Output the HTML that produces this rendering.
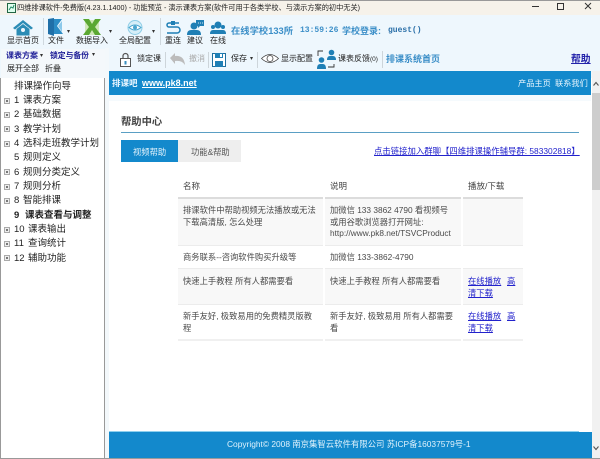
<!DOCTYPE html>
<html><head><meta charset="utf-8">
<style>
html,body{margin:0;padding:0;width:600px;height:459px;overflow:hidden;background:#fff}
body{position:relative;font-family:"Liberation Sans","Noto Sans CJK SC",sans-serif;color:#333}
.a,.t,.r{position:absolute}
.t{white-space:nowrap;line-height:12px;height:12px}
.b{font-size:8px;color:#222}
.tr{font-size:9.5px;color:#222;left:14px}
.n{display:inline-block;width:9px}
.box{position:absolute;left:4px;width:4px;height:4px;border:1px solid #aaa;background:linear-gradient(#777,#777) center/2px 2px no-repeat #eee}
.c{font-size:8.3px;color:#4a4a4a}
.l{font-size:8.3px;color:#22c;text-decoration:underline}
svg{position:absolute;overflow:visible}
</style></head><body>

<div class="a" style="left:0;top:0;width:600px;height:15px;background:#f6f2ea;border-top:1px solid #999;box-sizing:border-box"></div>
<div class="a" style="left:0;top:15px;width:600px;height:63px;background:#eef7fd"></div>
<div class="a" style="left:105px;top:48px;width:4px;height:411px;background:#f3f8fb"></div>
<div class="a" style="left:0;top:78px;width:105px;height:381px;background:#fff;border-left:1px solid #999;border-right:1px solid #999;box-sizing:border-box"></div>
<div class="a" style="left:0;top:458px;width:600px;height:1px;background:#999"></div>
<div class="a" style="left:1px;top:49px;width:104px;height:29px;background:#f4f8fb"></div>

<!-- title -->
<svg style="left:7px;top:3px" width="9" height="10"><rect x=".5" y=".5" width="8" height="9" fill="#dfe" stroke="#264"/><path d="M2 7l2-3 2 1 1-3" stroke="#286" fill="none"/></svg>
<div class="t" style="left:17px;top:2px;font-size:7.2px;color:#222">四维排课软件-免费版(4.23.1.1400) - 功能预览 - 演示课表方案(软件可用于各类学校、与演示方案的初中无关)</div>
<svg style="left:530px;top:0" width="70" height="15"><path d="M2 6.500h7" stroke="#333"/><rect x="27.500" y="3.500" width="6" height="6" fill="none" stroke="#333"/><path d="M55 3l6 6M61 3l-6 6" stroke="#333"/></svg>

<!-- toolbar row 1 -->
<svg style="left:13px;top:19px" width="20" height="17"><path d="M0 9L10 1l10 8-2 1.500L10 4 2 10.500z" fill="#2b8cb5"/><path d="M3.500 10L10 5l6.500 5v6.500h-13z" fill="#2b8cb5"/><circle cx="10" cy="11" r="2" fill="#eef7fd"/></svg>
<div class="t b" style="left:7px;top:35px">显示首页</div>
<div class="a" style="left:43px;top:18px;width:1px;height:27px;background:#cfd8de"></div>
<svg style="left:48px;top:18px" width="16" height="18"><path d="M0 1l6-1v18l-6-2z" fill="#1f6fa8"/><path d="M6 1h8L9 8l6 8H6z" fill="#2b8cc5"/><path d="M10 8l4-5v11z" fill="#8cc9ea"/></svg>
<div class="t b" style="left:48px;top:35px">文件</div>
<div class="t" style="left:67px;top:26px;font-size:6px;color:#333">▾</div>
<svg style="left:83px;top:19px" width="18" height="17"><path d="M2 1h14v15H2z" fill="#cfe8b8"/><path d="M0 0h6l3 5 3-5h6l-6 8 6 8h-6l-3-5-3 5H0l6-8z" fill="#5aa832"/></svg>
<div class="t b" style="left:76px;top:35px">数据导入</div>
<div class="t" style="left:109px;top:26px;font-size:6px;color:#333">▾</div>
<svg style="left:127px;top:20px" width="16" height="15"><circle cx="8" cy="7.500" r="7" fill="#d6eef8" stroke="#8ccde6"/><path d="M2 7.500q6-5 12 0q-6 5-12 0z" fill="#fff" stroke="#4aa6cf"/><circle cx="8" cy="7.500" r="2" fill="#4aa6cf"/></svg>
<div class="t b" style="left:119px;top:35px">全局配置</div>
<div class="t" style="left:152px;top:26px;font-size:6px;color:#333">▾</div>
<div class="a" style="left:160px;top:18px;width:1px;height:27px;background:#cfd8de"></div>
<svg style="left:166px;top:20px" width="15" height="15"><path d="M6 3h7M1 13h10a3 3 0 0 0 0-6H3a2 2 0 0 1 0-4h3" fill="none" stroke="#1f7fb5" stroke-width="1.500"/><rect x="5" y="1" width="4" height="4" fill="#1f7fb5"/></svg>
<div class="t b" style="left:165px;top:35px">重连</div>
<svg style="left:187px;top:20px" width="17" height="15"><circle cx="7" cy="6" r="3.500" fill="#1f7fb5"/><path d="M0 15q0-5 4-5h6q4 0 4 5z" fill="#1f7fb5"/><path d="M9 0h8v6h-4l-2 2V6H9z" fill="#1f7fb5"/><path d="M11 3h.8M13 3h.8M15 3h.8" stroke="#fff"/></svg>
<div class="t b" style="left:187px;top:35px">建议</div>
<svg style="left:210px;top:21px" width="16" height="13"><circle cx="8" cy="4" r="3.500" fill="#1f7fb5"/><circle cx="3" cy="6" r="2" fill="#1f7fb5"/><circle cx="13" cy="6" r="2" fill="#1f7fb5"/><path d="M0 13q0-4 3-4h10q3 0 3 4z" fill="#1f7fb5"/></svg>
<div class="t b" style="left:210px;top:35px">在线</div>
<div class="t" style="left:231px;top:25px;font-size:9.300px;font-weight:bold;color:#3c8fc8">在线学校133所</div>
<div class="t" style="left:300px;top:25px;font-size:8px;font-weight:bold;font-family:'Liberation Mono',monospace;color:#3c8fc8">13:59:26</div>
<div class="t" style="left:342px;top:25px;font-size:9px;color:#3c8fc8;font-weight:bold">学校登录:</div>
<div class="t" style="left:388px;top:25px;font-size:8px;font-family:'Liberation Mono',monospace;color:#2a6fa8;font-weight:bold">guest()</div>

<!-- toolbar row 2 -->
<div class="t" style="left:6px;top:50px;font-size:8px;font-weight:bold;color:#1c1c96">课表方案</div>
<div class="t" style="left:40px;top:50px;font-size:6px;color:#333">▾</div>
<div class="t" style="left:50px;top:50px;font-size:7.800px;font-weight:bold;color:#1c1c96">锁定与备份</div>
<div class="t" style="left:92px;top:49px;font-size:6px;color:#333">▾</div>
<div class="t b" style="left:7px;top:63px">展开全部</div>
<div class="t b" style="left:45px;top:63px">折叠</div>

<svg style="left:120px;top:52px" width="11" height="15"><path d="M3 7V4a2.500 2.500 0 0 1 5 0v3" fill="none" stroke="#555" stroke-width="1.200"/><rect x=".5" y="6.500" width="10" height="8" fill="#fff" stroke="#555"/><rect x="4.500" y="9" width="2" height="3.500" fill="#3a8fbf"/></svg>
<div class="t b" style="left:137px;top:53px">锁定课</div>
<div class="a" style="left:165px;top:52px;width:1px;height:16px;background:#cdd5da"></div>
<svg style="left:170px;top:52px" width="16" height="14"><path d="M0 6l5-5v3q9-1 10 9-3-5-10-4v3z" fill="#bcbcbc"/></svg>
<div class="t" style="left:189px;top:53px;font-size:8px;color:#aaa">撤消</div>
<div class="a" style="left:208px;top:52px;width:1px;height:16px;background:#cdd5da"></div>
<svg style="left:212px;top:53px" width="14" height="14"><path d="M.5.500h13v13H.5z" fill="#fff" stroke="#1f6f9f"/><path d="M3 0h8v5H3zM3 8h8v6H3z" fill="#1f7fb5"/><path d="M8 1h2v3H8z" fill="#fff"/></svg>
<div class="t b" style="left:231px;top:53px">保存</div>
<div class="t" style="left:250px;top:53px;font-size:6px;color:#333">▾</div>
<div class="a" style="left:257px;top:52px;width:1px;height:16px;background:#cdd5da"></div>
<svg style="left:261px;top:53px" width="18" height="11"><path d="M.5 5.500q8.500-8 17 0q-8.500 8-17 0z" fill="#fff" stroke="#444" stroke-width=".8"/><circle cx="9" cy="5.500" r="3" fill="none" stroke="#444" stroke-width=".8"/></svg>
<div class="t b" style="left:281px;top:53px">显示配置</div>
<svg style="left:317px;top:49px" width="21" height="20"><circle cx="14.500" cy="3.500" r="2.800" fill="#1f7fb5"/><path d="M10 11q0-4 3-4h3q3 0 3 4z" fill="#1f7fb5"/><circle cx="4.500" cy="11" r="2.800" fill="#1f7fb5"/><path d="M0 20q0-5 3-5h3q3 0 3 5z" fill="#1f7fb5"/><path d="M1 7V2h5M11 18h6v-3" fill="none" stroke="#333" stroke-width=".9"/></svg>
<div class="t b" style="left:338px;top:53px">课表反馈<span style="font-size:6.500px">(0)</span></div>
<div class="a" style="left:382px;top:51px;width:1px;height:17px;background:#cdd5da"></div>
<div class="t" style="left:386px;top:53px;font-size:9px;font-weight:bold;color:#3c8fc8">排课系统首页</div>
<div class="t" style="left:571px;top:54px;font-size:9.800px;font-weight:bold;color:#22a;text-decoration:underline">帮助</div>

<!-- blue header -->
<div class="a" style="left:109px;top:71px;width:482px;height:24px;background:#1389cc"></div>
<div class="a" style="left:109px;top:95px;width:482px;height:6px;background:#f5fafd"></div>
<div class="t" style="left:112px;top:77px;font-size:8.500px;font-weight:bold;color:#eaf6ff">排课吧</div>
<div class="t" style="left:142px;top:77px;font-size:9px;font-weight:bold;color:#fff;text-decoration:underline">www.pk8.net</div>
<div class="t" style="left:518px;top:78px;font-size:8.200px;color:#e4f3fc">产品主页</div>
<div class="t" style="left:555px;top:78px;font-size:8.200px;color:#e4f3fc">联系我们</div>

<!-- scrollbar -->
<div class="a" style="left:592px;top:71px;width:8px;height:387px;background:#f1f1f1"></div>
<div class="a" style="left:592px;top:93px;width:8px;height:97px;background:#cdcdcd"></div>
<svg style="left:592px;top:71px" width="8" height="387"><path d="M1.500 14.500L4 11.500l2.500 3M1.500 375.500L4 378.500l2.500-3" fill="none" stroke="#555" stroke-width="1.100"/></svg>

<!-- tree -->
<div class="t tr" style="top:81px;left:14px">排课操作向导</div>
<i class="box" style="top:98px"></i><div class="t tr" style="top:95px"><span class="n">1</span>课表方案</div>
<i class="box" style="top:112px"></i><div class="t tr" style="top:109px"><span class="n">2</span>基础数据</div>
<i class="box" style="top:126px"></i><div class="t tr" style="top:124px"><span class="n">3</span>教学计划</div>
<i class="box" style="top:141px"></i><div class="t tr" style="top:138px"><span class="n">4</span>选科走班教学计划</div>
<div class="t tr" style="top:152px"><span class="n">5</span>规则定义</div>
<i class="box" style="top:169px"></i><div class="t tr" style="top:167px"><span class="n">6</span>规则分类定义</div>
<i class="box" style="top:184px"></i><div class="t tr" style="top:181px"><span class="n">7</span>规则分析</div>
<i class="box" style="top:198px"></i><div class="t tr" style="top:195px"><span class="n">8</span>智能排课</div>
<div class="t tr" style="top:210px;font-weight:bold;color:#222"><span class="n" style="width:11px">9</span>课表查看与调整</div>
<i class="box" style="top:227px"></i><div class="t tr" style="top:224px"><span class="n" style="width:14px">10</span>课表输出</div>
<i class="box" style="top:241px"></i><div class="t tr" style="top:238px"><span class="n" style="width:14px">11</span>查询统计</div>
<i class="box" style="top:255px"></i><div class="t tr" style="top:253px"><span class="n" style="width:14px">12</span>辅助功能</div>

<!-- content -->
<div class="t" style="left:121px;top:117px;font-size:10.300px;font-weight:bold;color:#444">帮助中心</div>
<div class="a" style="left:121px;top:132px;width:458px;height:1px;background:#5a9fc4"></div>
<div class="a" style="left:121px;top:140px;width:57px;height:22px;background:#1389cc"></div>
<div class="t" style="left:133px;top:146px;font-size:8.300px;color:#e6f4fc">视频帮助</div>
<div class="a" style="left:178px;top:140px;width:63px;height:22px;background:#eeeeee"></div>
<div class="t" style="left:191px;top:146px;font-size:8.300px;color:#555">功能&amp;帮助</div>
<div class="t l" style="left:374px;top:145px;font-size:8.400px">点击链接加入群聊【四维排课操作辅导群: 583302818】</div>

<!-- table -->
<div class="a" style="left:178px;top:198px;width:345px;height:47px;background:#f8f8f8"></div>
<div class="a" style="left:178px;top:269px;width:345px;height:35px;background:#f8f8f8"></div>
<div class="a" style="left:178px;top:197px;width:345px;height:1.500px;background:#dcdcdc"></div>
<div class="a" style="left:178px;top:245px;width:345px;height:1px;background:#ececec"></div>
<div class="a" style="left:178px;top:268px;width:345px;height:1px;background:#ececec"></div>
<div class="a" style="left:178px;top:304px;width:345px;height:1px;background:#ececec"></div>
<div class="a" style="left:178px;top:339px;width:345px;height:2px;background:#f0f0f0"></div>
<div class="a" style="left:323px;top:197px;width:2px;height:144px;background:#fff"></div>
<div class="a" style="left:461px;top:197px;width:2px;height:144px;background:#fff"></div>

<div class="t c" style="left:183px;top:180px;color:#444;font-size:8.500px">名称</div>
<div class="t c" style="left:330px;top:180px;color:#444;font-size:8.500px">说明</div>
<div class="t c" style="left:468px;top:180px;color:#444;font-size:8.500px">播放/下载</div>

<div class="t c" style="left:183px;top:204px">排课软件中帮助视频无法播放或无法</div>
<div class="t c" style="left:183px;top:216px">下载高清版, 怎么处理</div>
<div class="t c" style="left:330px;top:204px">加微信 133 3862 4790 看视频号</div>
<div class="t c" style="left:330px;top:216px">或用谷歌浏览器打开网址:</div>
<div class="t c" style="left:330px;top:227px">http://www.pk8.net/TSVCProduct</div>
<div class="t c" style="left:183px;top:251px">商务联系--咨询软件购买升级等</div>
<div class="t c" style="left:330px;top:251px">加微信 133-3862-4790</div>
<div class="t c" style="left:183px;top:275px">快速上手教程 所有人都需要看</div>
<div class="t c" style="left:330px;top:275px">快速上手教程 所有人都需要看</div>
<div class="t l" style="left:468px;top:275px">在线播放</div>
<div class="t l" style="left:507px;top:275px">高</div>
<div class="t l" style="left:468px;top:287px">清下载</div>
<div class="t c" style="left:183px;top:310px">新手友好, 极致易用的免费精灵版教</div>
<div class="t c" style="left:183px;top:322px">程</div>
<div class="t c" style="left:330px;top:310px">新手友好, 极致易用 所有人都需要</div>
<div class="t c" style="left:330px;top:322px">看</div>
<div class="t l" style="left:468px;top:310px">在线播放</div>
<div class="t l" style="left:507px;top:310px">高</div>
<div class="t l" style="left:468px;top:322px">清下载</div>

<!-- footer -->
<div class="a" style="left:109px;top:431px;width:470px;height:1px;background:#8fd0ee"></div>
<div class="a" style="left:109px;top:432px;width:483px;height:26px;background:#1389cc"></div>
<div class="t" style="left:227px;top:438px;font-size:8.400px;color:#dff2fc">Copyright© 2008 南京集智云软件有限公司 苏ICP备16037579号-1</div>

</body></html>
